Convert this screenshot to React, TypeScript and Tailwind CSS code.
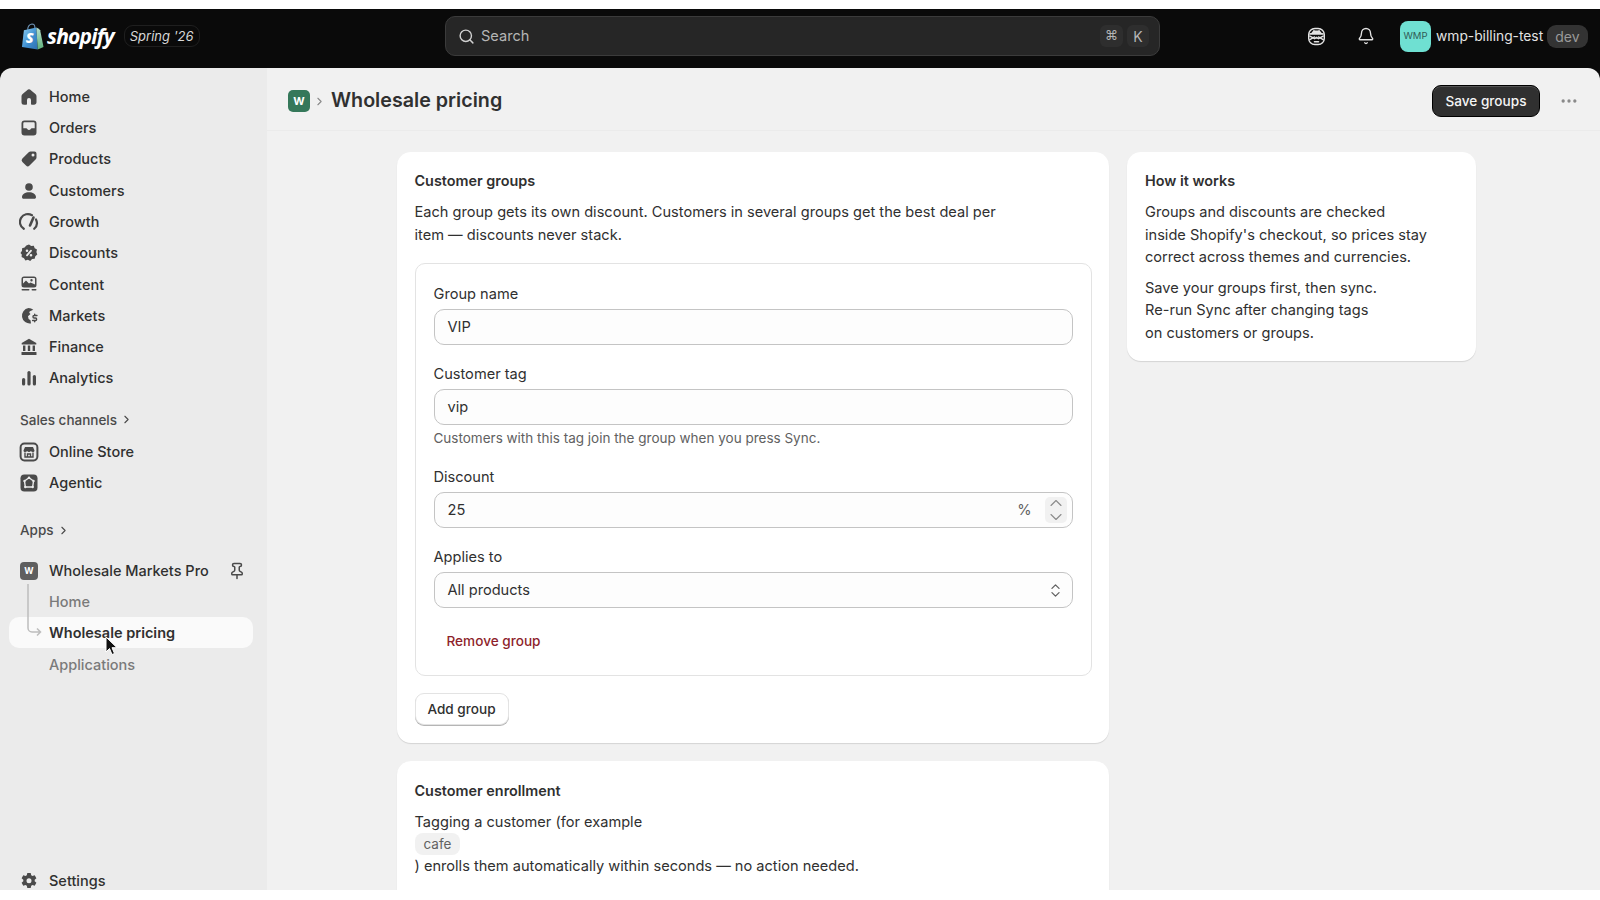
import React from 'react'
import { ChevronRight, Search, Bell, ChevronUp, ChevronDown, ChevronsUpDown, Ellipsis, Pin } from 'lucide-react'

type IconProps = { className?: string }

const HomeIcon = ({ className }: IconProps) => (
  <svg viewBox="0 0 20 20" className={className} fill="currentColor"><path d="M9 2.600a1.600 1.600 0 0 1 2 0l5.400 4.400c.7.600 1.100 1.400 1.100 2.300v6c0 1.400-1.100 2.500-2.500 2.500h-2.200a.8.800 0 0 1-.8-.8V13a2 2 0 0 0-4 0v4a.8.800 0 0 1-.8.800H5a2.500 2.500 0 0 1-2.500-2.500v-6c0-.9.400-1.700 1.100-2.300z" /></svg>
)
const OrdersIcon = ({ className }: IconProps) => (
  <svg viewBox="0 0 20 20" className={className} fill="currentColor"><path fillRule="evenodd" d="M5.500 2.500h9a3 3 0 0 1 3 3v9a3 3 0 0 1-3 3h-9a3 3 0 0 1-3-3v-9a3 3 0 0 1 3-3M4.300 10.200h2.900c.5 0 .9.300 1.100.7.300.6.900 1 1.700 1s1.400-.4 1.700-1c.2-.4.600-.7 1.100-.7h2.900V5.500c0-.7-.5-1.200-1.200-1.200h-9c-.7 0-1.200.5-1.200 1.200z" /></svg>
)
const TagIcon = ({ className }: IconProps) => (
  <svg viewBox="0 0 20 20" className={className} fill="currentColor"><path fillRule="evenodd" d="M11.500 2.500h4a2 2 0 0 1 2 2v4c0 .7-.3 1.300-.7 1.800l-6.300 6.300a2.500 2.500 0 0 1-3.500 0l-3.600-3.600a2.500 2.500 0 0 1 0-3.500l6.300-6.300c.5-.4 1.100-.7 1.800-.7M14 7.500a1.500 1.500 0 1 0 0-3 1.500 1.500 0 0 0 0 3" /></svg>
)
const PersonIcon = ({ className }: IconProps) => (
  <svg viewBox="0 0 20 20" className={className} fill="currentColor"><circle cx="10" cy="6" r="3.800" /><path d="M10 11.300c-3.800 0-6.800 1.900-7 4.700-.1 1 .7 1.800 1.700 1.800h10.600c1 0 1.800-.8 1.700-1.800-.2-2.800-3.200-4.700-7-4.700" /></svg>
)
const GrowthIcon = ({ className }: IconProps) => (
  <svg viewBox="0 0 20 20" className={className} fill="none" stroke="currentColor" strokeWidth="2.200" strokeLinecap="round"><path d="M4.800 16.800A7.800 7.800 0 0 1 13 3.200" /><path d="M17 7.500a7.800 7.800 0 0 1-1.800 9.300" /><path d="m14.500 5.500-3.500 8" strokeWidth="2.600" /></svg>
)
const DiscountIcon = ({ className }: IconProps) => (
  <svg viewBox="0 0 20 20" className={className} fill="currentColor"><path fillRule="evenodd" d="M10 1.500 12.200 3l2.600-.2.900 2.400 2.300 1.300-.6 2.500.9 2.500-2 1.700-.6 2.500-2.600.4-1.900 1.900-2.300-1.200-2.500.6-1.400-2.200-2.400-1.100.2-2.600L1.500 9.900l1.500-2.100.1-2.600 2.500-.7L7.300 2.400zM8 6.500a1.300 1.300 0 1 0 0 2.600 1.300 1.300 0 0 0 0-2.600m4 4.400a1.300 1.300 0 1 0 0 2.600 1.300 1.300 0 0 0 0-2.600m.6-3.900a.9.900 0 0 0-1.300 0l-4 4.700a.9.900 0 1 0 1.400 1.200l4-4.700a.9.900 0 0 0-.1-1.200" /></svg>
)
const ContentIcon = ({ className }: IconProps) => (
  <svg viewBox="0 0 20 20" className={className} fill="currentColor"><path fillRule="evenodd" d="M5 2.500h10A2.500 2.500 0 0 1 17.500 5v6a2.500 2.500 0 0 1-2.500 2.500H5A2.500 2.500 0 0 1 2.500 11V5A2.500 2.500 0 0 1 5 2.500M12.500 5a1.200 1.200 0 1 0 0 2.400 1.200 1.200 0 0 0 0-2.400M4 9.500 7 6.500l3 3 1.500-1 4.500 2c0-1 0-.5 0-1.500V5c0-.6-.4-1-1-1H5c-.6 0-1 .4-1 1z" /><rect x="2.500" y="15" width="8" height="1.600" rx=".8" /><rect x="12.500" y="15" width="5" height="1.600" rx=".8" /></svg>
)
const MarketsIcon = ({ className }: IconProps) => (
  <svg viewBox="0 0 20 20" className={className} fill="currentColor"><path d="M9.500 2a7.500 7.500 0 0 1 4.800 1.800L11 5.300c-.8.400-.9 1.400-.3 2l.8.800-2.500 2.200.6 2.700 1.900 1.300.5 3.100a7.500 7.500 0 1 1-2.500-15.400" /><path d="M18 9.500h-2.800a1.200 1.200 0 0 0 0 2.500h1.200a1.200 1.200 0 0 1 0 2.500h-2.800M15.700 8.300v1.200M15.700 14.500v1.200" fill="none" stroke="currentColor" strokeWidth="1.400" strokeLinecap="round" /></svg>
)
const FinanceIcon = ({ className }: IconProps) => (
  <svg viewBox="0 0 20 20" className={className} fill="currentColor"><path d="M10 1.800 17.300 6v1.500H2.700V6z" /><rect x="4" y="8.500" width="2.400" height="5.500" /><rect x="8.800" y="8.500" width="2.400" height="5.500" /><rect x="13.600" y="8.500" width="2.400" height="5.500" /><rect x="2.500" y="15" width="15" height="3" rx=".6" /></svg>
)
const AnalyticsIcon = ({ className }: IconProps) => (
  <svg viewBox="0 0 20 20" className={className} fill="currentColor"><rect x="3" y="10" width="3.200" height="7.500" rx="1.600" /><rect x="8.400" y="3" width="3.200" height="14.500" rx="1.600" /><rect x="13.800" y="7" width="3.200" height="10.500" rx="1.600" /></svg>
)
const StoreIcon = ({ className }: IconProps) => (
  <svg viewBox="0 0 20 20" className={className} fill="none" stroke="currentColor" strokeWidth="2">
    <rect x="1.600" y="1.600" width="16.800" height="16.800" rx="3.800" />
    <path d="M6 5h8l1.500 3.500c0 1-.8 1.500-1.700 1.500s-1.500-.4-1.900-1.100c-.4.700-1.100 1.100-1.900 1.100s-1.500-.4-1.900-1.100c-.4.700-1 1.100-1.900 1.100s-1.700-.5-1.700-1.500z" fill="currentColor" stroke="none" />
    <path d="M6 10.500V15h8v-4.500M8.500 15v-3h3v3" strokeWidth="1.400" />
  </svg>
)
const AgenticIcon = ({ className }: IconProps) => (
  <svg viewBox="0 0 20 20" className={className}>
    <rect x="1.500" y="1.500" width="17" height="17" rx="3.800" fill="currentColor" />
    <path d="M10 4.800 14.500 8l-.8 6H6.300l-.8-6z" fill="none" stroke="#ebebeb" strokeWidth="1.400" strokeLinejoin="round" />
    <circle cx="10" cy="4.800" r="1.200" fill="#ebebeb" />
    <circle cx="14.500" cy="8" r="1.200" fill="#ebebeb" />
    <circle cx="5.500" cy="8" r="1.200" fill="#ebebeb" />
    <circle cx="13.700" cy="14" r="1.200" fill="#ebebeb" />
    <circle cx="6.300" cy="14" r="1.200" fill="#ebebeb" />
  </svg>
)
const GearIcon = ({ className }: IconProps) => (
  <svg viewBox="0 0 20 20" className={className} fill="currentColor"><path fillRule="evenodd" d="M8.300 2h3.400l.5 2.200 1.300.8 2.200-.7 1.700 3-1.700 1.500v1.400l1.700 1.500-1.700 3-2.200-.7-1.300.8-.5 2.200H8.300l-.5-2.200-1.300-.8-2.200.7-1.700-3L4.300 10.200V8.800L2.600 7.300l1.700-3 2.200.7 1.300-.8zM10 7.300a2.500 2.500 0 1 0 0 5 2.500 2.500 0 0 0 0-5" /></svg>
)
const SpyIcon = ({ className }: IconProps) => (
  <svg viewBox="0 0 20 20" className={className} fill="none" stroke="currentColor" strokeWidth="1.500" strokeLinecap="round">
    <rect x="1.800" y="1.500" width="16.400" height="17" rx="6.500" />
    <path d="M2.500 7.300C5 7.300 6.500 5.800 7.300 4c1.800.7 3.600.7 5.400 0 .8 1.800 2.300 3.300 4.800 3.300z" fill="currentColor" />
    <path d="M3 9.500 8 12.300 10 11l2 1.300 5-2.800" />
    <path d="M3 13.300 8 10.500M17 13.300l-5-2.800" />
    <path d="M7.800 15.500h4.400" />
  </svg>
)

const mainNav = [
  { label: 'Home', icon: HomeIcon },
  { label: 'Orders', icon: OrdersIcon },
  { label: 'Products', icon: TagIcon },
  { label: 'Customers', icon: PersonIcon },
  { label: 'Growth', icon: GrowthIcon },
  { label: 'Discounts', icon: DiscountIcon },
  { label: 'Content', icon: ContentIcon },
  { label: 'Markets', icon: MarketsIcon },
  { label: 'Finance', icon: FinanceIcon },
  { label: 'Analytics', icon: AnalyticsIcon },
]

function NavRow({ label, icon: Icon }: { label: string; icon: React.ComponentType<IconProps> }) {
  return (
    <div className="flex h-[31.3px] items-center">
      <span className="-ml-[1px] w-[30px] text-[#4a4a4a]"><Icon className="h-[20px] w-[20px]" /></span>
      <span className="font-medium text-[#303030]">{label}</span>
    </div>
  )
}

function ShopifyBag() {
  return (
    <svg viewBox="0 0 24 28" className="h-[27px] w-[23px]">
      <defs>
        <linearGradient id="bag" x1="0" y1="0" x2="1" y2="1">
          <stop offset="0" stopColor="#8fd0f4" />
          <stop offset="0.55" stopColor="#3f8fd0" />
          <stop offset="1" stopColor="#2f6fb0" />
        </linearGradient>
        <linearGradient id="bagSide" x1="0" y1="0" x2="0" y2="1">
          <stop offset="0" stopColor="#b8dfd0" />
          <stop offset="1" stopColor="#5fb07a" />
        </linearGradient>
      </defs>
      <path d="M7 7c0-3 2-5.500 4.500-6 2 0 3 2 3 4" fill="none" stroke="#6c8fb0" strokeWidth="1.200" />
      <path d="M1 25 3 7.500 16 4.500 17.500 27.500z" fill="url(#bag)" />
      <path d="M16 4.500 18.500 6l1.500 1.500L23.500 25 17.500 27.500z" fill="url(#bagSide)" />
      <text x="5" y="21" fontSize="15" fontWeight="800" fontStyle="italic" fill="#fff" fontFamily="'Open Sans', sans-serif">S</text>
    </svg>
  )
}

function Field({ label, children }: { label: string; children: React.ReactNode }) {
  return (
    <div>
      <div className="mb-[4px] h-[22px] leading-[22px] text-[#303030]">{label}</div>
      {children}
    </div>
  )
}

function TextBox({ children }: { children: React.ReactNode }) {
  return (
    <div className="flex h-[36px] items-center rounded-[10px] border border-[#c4c4c4] bg-[#fdfdfd] pl-[13px] pr-[5px] text-[#303030]">
      {children}
    </div>
  )
}

export default function App() {
  return (
    <div className="flex h-[900px] w-[1600px] flex-col overflow-hidden bg-white font-['Inter',sans-serif] text-[14.6px] text-[#303030]">
      <div className="h-[9px] shrink-0 bg-white" />
      {/* top bar */}
      <header className="relative flex h-[59px] shrink-0 items-center bg-[#0a0a0a] pb-[5px]">
        <div className="flex w-[445px] items-center pl-[21px]">
          <ShopifyBag />
          <span className="ml-[3px] pt-[1px] font-['Open_Sans',sans-serif] text-[21px] font-bold italic tracking-[-0.8px] text-white">shopify</span>
          <span className="ml-[10px] flex h-[22px] items-center rounded-[9px] border border-[#1f1f1f] px-[5px] pt-[2px] text-[13px] italic text-[#d8d8d8]">Spring '26</span>
        </div>
        <div className="flex h-[40px] w-[715px] items-center rounded-[10px] border border-[#3b3b3b] bg-[#262626] pl-[12px] pr-[10px] text-[#b5b5b5]">
          <Search className="h-[17px] w-[17px] text-[#d0d0d0]" strokeWidth={2} />
          <span className="ml-[6px] flex-1 pt-[1px]">Search</span>
          <span className="flex h-[22px] w-[23px] items-center justify-center rounded-[6px] bg-[#2e2e2e] text-[13px]">⌘</span>
          <span className="ml-[4px] flex h-[22px] w-[22px] items-center justify-center rounded-[6px] bg-[#2e2e2e] text-[14px]">K</span>
        </div>
        <div className="ml-[147px] flex items-center">
          <SpyIcon className="h-[19px] w-[19px] text-[#e3e3e3]" />
          <Bell className="ml-[31px] h-[18px] w-[18px] text-[#e3e3e3]" strokeWidth={1.8} />
          <span className="ml-[25px] flex h-[31px] w-[31px] items-center justify-center rounded-[8px] bg-[#6fe0d2] text-[9.500px] text-[#2f5a55]">WMP</span>
          <span className="ml-[5px] text-[13.800px] text-[#e3e3e3]">wmp-billing-test</span>
          <span className="ml-[4px] rounded-[9px] bg-[#333333] px-[8px] py-[1px] text-[14px] text-[#9a9a9a]">dev</span>
        </div>
      </header>
      {/* body */}
      <div className="flex min-h-0 flex-1 bg-[#0a0a0a]">
        <aside className="relative flex w-[267px] shrink-0 flex-col rounded-tl-[12px] bg-[#ebebeb] pl-[20px] pt-[13px] text-[14.5px]">
          {mainNav.map(n => <NavRow key={n.label} label={n.label} icon={n.icon} />)}
          <div className="mt-[13px] flex h-[26px] items-center text-[13.500px] font-medium text-[#4a4a4a]">
            Sales channels <ChevronRight className="ml-[3px] h-[13px] w-[13px]" strokeWidth={2} />
          </div>
          <div className="mt-[3px]">
            <NavRow label="Online Store" icon={StoreIcon} />
            <NavRow label="Agentic" icon={AgenticIcon} />
          </div>
          <div className="mt-[19px] flex h-[26px] items-center text-[13.500px] font-medium text-[#4a4a4a]">
            Apps <ChevronRight className="ml-[3px] h-[13px] w-[13px]" strokeWidth={2} />
          </div>
          <div className="mt-[11.500px] flex h-[31.3px] items-center">
            <span className="mr-[11px] flex h-[18px] w-[18px] items-center justify-center rounded-[4px] bg-[#5f5f5f] text-[9px] font-bold text-white">W</span>
            <span className="flex-1 font-medium text-[#303030]">Wholesale Markets Pro</span>
            <Pin className="mr-[21px] h-[18px] w-[18px] text-[#4a4a4a]" strokeWidth={2} />
          </div>
          <div className="pl-[29px] font-medium text-[#7a7a7a]">
            <div className="flex h-[31.3px] items-center">Home</div>
            <div className="-ml-[40px] -mt-[1px] mb-[1px] mr-[14px] flex h-[31.3px] items-center rounded-[10px] bg-[#fafafa] pl-[40px] pt-[1px] font-semibold text-[#303030]">Wholesale pricing</div>
            <div className="flex h-[31.3px] items-center">Applications</div>
          </div>
          <svg className="absolute left-[26px] top-[514px] h-[70px] w-[16px] text-[#bdbdbd]" viewBox="0 0 16 70" fill="none" stroke="currentColor" strokeWidth="1.500">
            <path d="M2 2v44a4 4 0 0 0 4 4h8M11 46.500l3.500 3.500-3.500 3.500" />
          </svg>
          <svg className="absolute left-[105px] top-[568px] h-[20px] w-[13px]" viewBox="0 0 13 20">
            <path d="M1 1v15l3.500-3.500 2.500 6 2.500-1-2.500-5.800h5z" fill="#111" stroke="#fff" strokeWidth="1" />
          </svg>
          <div className="-mb-[7px] mt-auto flex h-[31.3px] shrink-0 items-center">
            <span className="-ml-[1px] w-[30px] text-[#4a4a4a]"><GearIcon className="h-[20px] w-[20px]" /></span>
            <span className="font-medium text-[#303030]">Settings</span>
          </div>
        </aside>
        <main className="min-w-0 flex-1 overflow-hidden rounded-tr-[12px] bg-[#f1f1f1]">
          <div className="flex h-[63px] items-center border-b border-[#ebebeb] pl-[21px] pr-[21px] pt-[4px]">
            <span className="flex h-[22px] w-[22px] items-center justify-center rounded-[5px] bg-[#35785a] text-[11px] font-bold text-white">W</span>
            <ChevronRight className="mx-[3px] h-[13px] w-[13px] text-[#8a8a8a]" strokeWidth={2} />
            <h1 className="ml-[2px] text-[19.700px] font-semibold text-[#303030]">Wholesale pricing</h1>
            <button className="ml-auto h-[32px] w-[108px] rounded-[9px] border border-black bg-[#303030] text-[13.600px] font-medium text-[#f5f5f5] shadow-[inset_0_1px_0_#555]">Save groups</button>
            <Ellipsis className="ml-[19px] h-[20px] w-[20px] text-[#8a8a8a]" />
          </div>
          <div className="flex items-start gap-[18px] pl-[130px] pt-[21px]">
            <div className="flex w-[712px] shrink-0 flex-col gap-[18px]">
              <section className="rounded-[14px] bg-white px-[17.500px] py-[18px] shadow-[0_1px_1px_rgba(0,0,0,0.12)]">
                <h2 className="h-[22px] text-[14.400px] font-semibold leading-[22px] text-[#303030]">Customer groups</h2>
                <p className="mt-[9px] w-[600px] leading-[22.500px]">Each group gets its own discount. Customers in several groups get the best deal per item — discounts never stack.</p>
                <div className="mt-[17px] rounded-[10px] border border-[#e3e3e3] px-[18px] pb-[24px] pt-[19px]">
                  <Field label="Group name"><TextBox><span className="pt-[1px]">VIP</span></TextBox></Field>
                  <div className="mt-[18px]">
                    <Field label="Customer tag"><TextBox><span className="pt-[1px]">vip</span></TextBox></Field>
                    <p className="mt-[4px] text-[13.500px] leading-[18px] text-[#616161]">Customers with this tag join the group when you press Sync.</p>
                  </div>
                  <div className="mt-[19px]">
                    <Field label="Discount">
                      <TextBox>
                        <span className="flex-1 pt-[1px]">25</span>
                        <span className="mr-[13px] pt-[1px] text-[#616161]">%</span>
                        <span className="flex h-[26px] w-[22px] flex-col items-center justify-center rounded-[5px] bg-[#f1f1f1] text-[#8a8a8a]">
                          <ChevronUp className="-mb-[3px] h-[20px] w-[20px] shrink-0" strokeWidth={1.3} />
                          <ChevronDown className="-mt-[3px] h-[20px] w-[20px] shrink-0" strokeWidth={1.3} />
                        </span>
                      </TextBox>
                    </Field>
                  </div>
                  <div className="mt-[18px]">
                    <Field label="Applies to">
                      <TextBox>
                        <span className="flex-1 pt-[1px]">All products</span>
                        <ChevronsUpDown className="mr-[3px] h-[17px] w-[17px] text-[#616161]" strokeWidth={1.8} />
                      </TextBox>
                    </Field>
                  </div>
                  <div className="mt-[23px] pl-[13px] text-[13.600px] font-medium text-[#8e1f2b]">Remove group</div>
                </div>
                <button className="mt-[17px] h-[32px] w-[94px] rounded-[9px] border border-[#e3e3e3] bg-white text-[13.600px] font-medium text-[#303030] shadow-[0_1px_0_#b5b5b5]">Add group</button>
              </section>
              <section className="h-[200px] rounded-[14px] bg-white px-[17.500px] pb-[18px] pt-[19px] shadow-[0_1px_1px_rgba(0,0,0,0.12)]">
                <h2 className="h-[22px] text-[14.400px] font-semibold leading-[22px] text-[#303030]">Customer enrollment</h2>
                <p className="mt-[9px] leading-[22.500px]">Tagging a customer (for example</p>
                <span className="-mt-[1px] block w-fit rounded-[8px] bg-[#f1f1f1] px-[9px] text-[13.500px] leading-[22px] text-[#616161]">cafe</span>
                <p className="leading-[22.500px]">) enrolls them automatically within seconds — no action needed.</p>
              </section>
            </div>
            <section className="w-[349px] shrink-0 rounded-[14px] bg-white px-[18px] pb-[17px] pt-[18px] shadow-[0_1px_1px_rgba(0,0,0,0.12)]">
              <h2 className="h-[22px] text-[14.400px] font-semibold leading-[22px] text-[#303030]">How it works</h2>
              <p className="mt-[9px] leading-[22.500px]">Groups and discounts are checked<br />inside Shopify's checkout, so prices stay<br />correct across themes and currencies.</p>
              <p className="mt-[8px] leading-[22.500px]">Save your groups first, then sync.<br />Re-run Sync after changing tags<br />on customers or groups.</p>
            </section>
          </div>
        </main>
      </div>
      <div className="h-[10px] shrink-0 bg-white" />
    </div>
  )
}
